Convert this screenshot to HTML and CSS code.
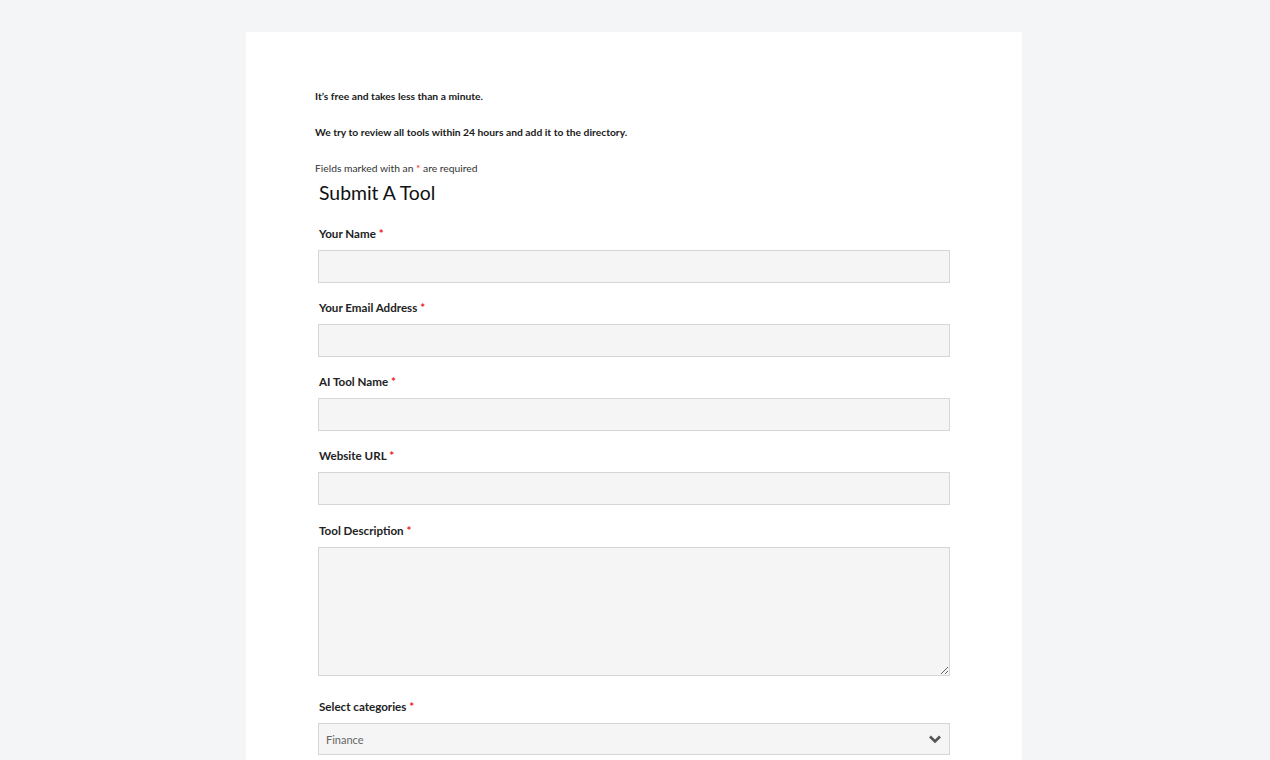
FILE: index.html
```html
<!DOCTYPE html>
<html>
<head>
<meta charset="utf-8">
<link rel="stylesheet" href="styles.css">
</head>
<body>
<main class="card">
  <p class="intro">It’s free and takes less than a minute.</p>
  <p class="intro">We try to review all tools within 24 hours and add it to the directory.</p>
  <p class="note">Fields marked with an <span class="req">*</span> are required</p>
  <form class="form">
    <h1 class="title">Submit A Tool</h1>
    <div class="field first">
      <label class="label">Your Name <span class="req">*</span></label>
      <input class="input" type="text">
    </div>
    <div class="field">
      <label class="label">Your Email Address <span class="req">*</span></label>
      <input class="input" type="text">
    </div>
    <div class="field">
      <label class="label">AI Tool Name <span class="req">*</span></label>
      <input class="input" type="text">
    </div>
    <div class="field">
      <label class="label">Website URL <span class="req">*</span></label>
      <input class="input" type="text">
    </div>
    <div class="field desc">
      <label class="label">Tool Description <span class="req">*</span></label>
      <textarea class="input textarea"></textarea>
    </div>
    <div class="field">
      <label class="label">Select categories <span class="req">*</span></label>
      <div class="select">
        <span class="select-value">Finance</span>
        <svg class="chev" width="14" height="10" viewBox="0 0 14 10"><path d="M2 2.5 L7 7.5 L12 2.5" fill="none" stroke="#555" stroke-width="2.6"/></svg>
      </div>
    </div>
  </form>
</main>
</body>
</html>
```

FILE: styles.css
```css
* { box-sizing: border-box; }
html, body { margin: 0; padding: 0; }
body {
  background: #f4f5f7;
  font-family: Lato, "Open Sans", sans-serif;
  color: #1e1e1e;
  height: 760px;
  overflow: hidden;
}
.card {
  width: 776px;
  margin: 32px 0 0 246px;
  background: #fff;
  padding: 57px 69px 40px 69px;
  min-height: 800px;
}
.intro {
  margin: 0 0 22px 0;
  font-size: 10.3px;
  font-weight: 700;
  line-height: 14px;
  color: #1a1a1a;
}
.note {
  margin: 0;
  font-size: 10.3px;
  line-height: 14px;
  color: #333;
}
.req { color: #e22; }
.form { padding: 0 3px; width: 638px; }
.title {
  margin: 4px 0 0 1px;
  font-size: 19.4px;
  font-weight: 400;
  line-height: 28px;
  color: #111;
}
.field {
  display: flex;
  flex-direction: column;
  margin-top: 17px;
}
.field.first { margin-top: 19px; }
.field.desc { margin-top: 18px; }
.label {
  font-size: 11.6px;
  font-weight: 700;
  line-height: 16px;
  margin-bottom: 8px;
  margin-left: 1px;
  color: #222;
}
.input {
  width: 632px;
  height: 33px;
  background: #f5f5f5;
  border: 1px solid #d6d6d6;
  border-radius: 0;
  margin: 0;
  font-family: inherit;
}
.textarea {
  height: 129px;
  resize: vertical;
  margin-bottom: 6px;
}
.select {
  width: 632px;
  height: 32px;
  background: #f5f5f5;
  border: 1px solid #d6d6d6;
  display: flex;
  align-items: center;
  justify-content: space-between;
  padding: 0 7px;
}
.select-value { font-size: 11px; color: #666; }
.chev { display: block; }
```
